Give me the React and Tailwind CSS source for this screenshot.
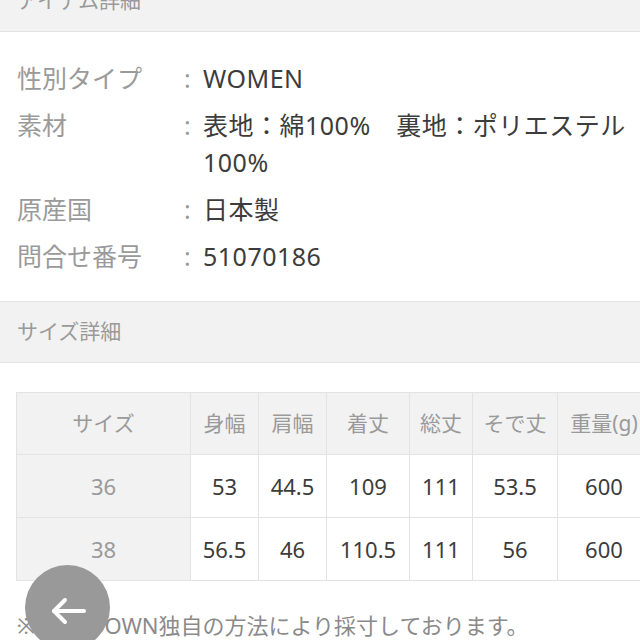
const info = [
  { label: '性別タイプ', value: ['WOMEN'] },
  { label: '素材', value: ['表地：綿100%　裏地：ポリエステル', '100%'] },
  { label: '原産国', value: ['日本製'] },
  { label: '問合せ番号', value: ['51070186'] },
];

const heads = ['サイズ', '身幅', '肩幅', '着丈', '総丈', 'そで丈', '重量(g)'];
const widths = ['w-[174px]', 'w-[68px]', 'w-[68px]', 'w-[83px]', 'w-[63px]', 'w-[85px]', 'w-[93px]'];
const rows = [
  ['36', '53', '44.5', '109', '111', '53.5', '600'],
  ['38', '56.5', '46', '110.5', '111', '56', '600'],
];

const font = { fontFamily: '"Noto Sans", "Noto Sans CJK JP", sans-serif' };

export default function App() {
  return (
    <div className="relative w-[640px] h-[640px] overflow-hidden bg-white" style={font}>
      {/* item details header */}
      <div className="-mt-[30px] h-[62px] flex items-center px-[17px] bg-[#f2f2f2] border-b border-[#e3e3e3] text-[21px] text-[#9a9a9a]">
        アイテム詳細
      </div>

      <div className="pt-[28px] flex flex-col gap-[10px]">
        {info.map((r) => (
          <div key={r.label} className="flex text-[25px] leading-[37px]">
            <div className="w-[184px] pl-[17px] text-[#9a9a9a] shrink-0">{r.label}</div>
            <div className="w-[19px] text-[#9a9a9a] shrink-0">:</div>
            <div className="text-[#3c3c3c] tracking-[0.5px]">
              {r.value.map((v) => (
                <div key={v} className="whitespace-nowrap">{v}</div>
              ))}
            </div>
          </div>
        ))}
      </div>

      {/* size details header */}
      <div className="mt-[26px] h-[62px] flex items-center px-[17px] bg-[#f2f2f2] border-y border-[#e3e3e3] text-[21px] text-[#9a9a9a]">
        サイズ詳細
      </div>

      <div className="pl-[16px] pt-[29px]">
        <table className="table-fixed border-collapse w-[634px] text-center">
          <thead>
            <tr className="h-[62px] bg-[#f2f2f2]">
              {heads.map((h, i) => (
                <th key={h} className={`${widths[i]} border border-[#e3e3e3] font-normal text-[21px] text-[#9a9a9a] whitespace-nowrap`}>
                  {h}
                </th>
              ))}
            </tr>
          </thead>
          <tbody>
            {rows.map((row) => (
              <tr key={row[0]} className="h-[63px]">
                {row.map((c, i) => (
                  <td
                    key={i}
                    className={
                      i === 0
                        ? 'border border-[#e3e3e3] bg-[#f2f2f2] text-[22px] text-[#9a9a9a]'
                        : 'border border-[#e3e3e3] text-[22px] text-[#3c3c3c]'
                    }
                  >
                    {c}
                  </td>
                ))}
              </tr>
            ))}
          </tbody>
        </table>
      </div>

      <p className="mt-[29px] pl-[17px] text-[22px] leading-[30px] text-[#8a8a8a] whitespace-nowrap">
        ※<span className="inline-block w-[69px]">採寸は</span>OWN独自の方法により採寸しております。
      </p>

      {/* back button */}
      <button className="absolute left-[25px] top-[565px] w-[85px] h-[85px] rounded-full bg-[#999999] flex items-center justify-center">
        <svg width="40" height="30" viewBox="0 0 40 30" className="mt-[7px]" fill="none" stroke="#ffffff" strokeWidth="4" strokeLinecap="round" strokeLinejoin="round">
          <path d="M6 15 H36" />
          <path d="M17 4 L6 15 L17 26" />
        </svg>
      </button>
    </div>
  );
}
